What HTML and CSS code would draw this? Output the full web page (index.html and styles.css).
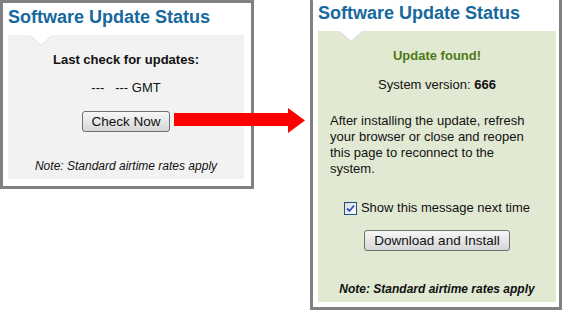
FILE: index.html
```html
<!DOCTYPE html>
<html>
<head>
  <meta charset="utf-8">
  <title>Software Update Status</title>
  <link rel="stylesheet" href="styles.css">
</head>
<body>
  <div class="scene">
    <section class="panel panel-check">
      <h2 class="panel-title">Software Update Status</h2>
      <div class="panel-body body-gray">
        <span class="notch"></span>
        <p class="label">Last check for updates:</p>
        <p class="stamp">---&nbsp;&nbsp;&nbsp;--- GMT</p>
        <button class="btn btn-check">Check Now</button>
        <p class="note">Note: Standard airtime rates apply</p>
      </div>
    </section>

    <!-- arrow sits over the gap between both panels -->
    <svg class="arrow" width="131" height="25" viewBox="0 0 131 25">
      <polygon points="0,5 114,5 114,0 131,12.5 114,25 114,18 0,18" fill="#ff0000"/>
    </svg>

    <section class="panel panel-found">
      <h2 class="panel-title">Software Update Status</h2>
      <div class="panel-body body-green">
        <span class="notch"></span>
        <p class="found">Update found!</p>
        <p class="version">System version: <b>666</b></p>
        <p class="info">After installing the update, refresh your browser or close and reopen this page to reconnect to the system.</p>
        <label class="show-again">
          <span class="check-box">
            <svg width="9" height="9" viewBox="0 0 9 9"><path d="M1 4.5 L3.5 7 L8 1.5" fill="none" stroke="#2a4fc0" stroke-width="1.8"/></svg>
          </span>
          Show this message next time
        </label>
        <button class="btn btn-install">Download and Install</button>
        <p class="note note-bold">Note: Standard airtime rates apply</p>
      </div>
    </section>
  </div>
</body>
</html>
```

FILE: styles.css
```css
body {
  margin: 0;
  background-color: white;
  font-family: "Liberation Sans", Arial, sans-serif;
  font-size: 13px;
  color: #111;
}
p {
  margin: 0;
}
.scene {
  position: relative;
  display: flex;
  align-items: flex-start;
  gap: 56px;
  width: 562px;
  height: 312px;
  overflow: hidden;
}
.panel {
  box-sizing: border-box;
  border: 3px solid #808080;
  background-color: white;
}
.panel-check {
  width: 254px;
  height: 189px;
  padding: 4px 7px 7px 5px;
}
.panel-found {
  width: 252px;
  height: 314px;
  margin-top: -4px;
  padding: 4px 3px 5px 5px;
}
.panel-title {
  margin: 0 0 8px 0;
  font-size: 18px;
  line-height: 20px;
  font-weight: bold;
  color: #16689e;
}
.panel-body {
  position: relative;
  display: flex;
  flex-direction: column;
  align-items: center;
  box-sizing: border-box;
}
.body-gray {
  height: 144px;
  padding-top: 17px;
  background-color: #f2f2f2;
}
.body-green {
  height: 271px;
  padding-top: 17px;
  background-color: #e2e9d3;
}
.notch {
  position: absolute;
  top: 0;
  left: 22px;
  width: 0;
  height: 0;
  border-left: 11px solid transparent;
  border-right: 11px solid transparent;
  border-top: 10px solid white;
  filter: drop-shadow(0 1px 0 #dcdcdc);
}
.label {
  font-weight: bold;
  line-height: 16px;
}
.stamp {
  margin-top: 12px;
  line-height: 16px;
}
.btn {
  box-sizing: border-box;
  height: 21px;
  padding: 0;
  border: 1px solid #707070;
  border-radius: 3px;
  background: linear-gradient(#f7f7f7, #e6e6e6 50%, #d6d6d6);
  font-family: inherit;
  font-size: 13.5px;
  color: #111;
  white-space: nowrap;
}
.btn-check {
  width: 88px;
  margin-top: 15px;
}
.btn-install {
  width: 146px;
  margin-top: 14px;
}
.note {
  margin-top: auto;
  margin-bottom: 6px;
  font-size: 12px;
  line-height: 14px;
  font-style: italic;
}
.note-bold {
  font-weight: bold;
}
.arrow {
  position: absolute;
  left: 174px;
  top: 108px;
}
.found {
  font-weight: bold;
  color: #4e7a16;
  line-height: 16px;
}
.version {
  margin-top: 13px;
  line-height: 16px;
}
.info {
  align-self: stretch;
  margin-top: 20px;
  padding: 0 22px 0 12px;
  line-height: 16px;
}
.show-again {
  display: flex;
  align-items: center;
  gap: 4px;
  margin-top: 23px;
  line-height: 16px;
}
.check-box {
  box-sizing: border-box;
  display: flex;
  align-items: center;
  justify-content: center;
  width: 13px;
  height: 13px;
  border: 1px solid #1c5180;
  background: linear-gradient(135deg, #dcdcd7, #ffffff);
}
```
